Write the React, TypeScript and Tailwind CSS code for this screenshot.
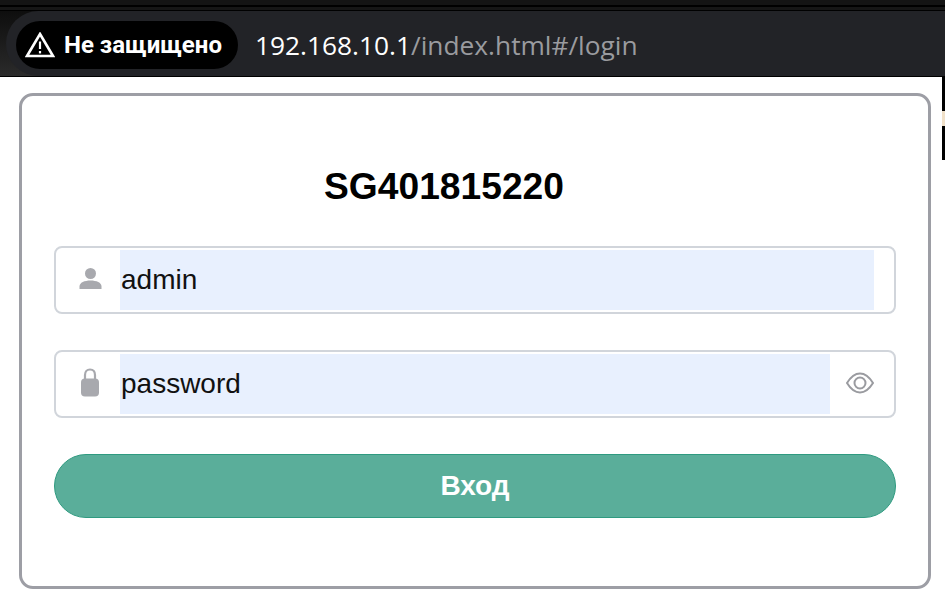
export default function App() {
  return (
    <div className="relative w-[945px] h-[609px] overflow-hidden bg-white font-['Liberation_Sans',sans-serif]">
      {/* browser bar */}
      <div className="h-[77px] flex flex-col bg-black">
        <div className="h-[5px] bg-[#141414]" />
        <div className="h-[2px] bg-black" />
        <div className="h-[3px] bg-[#161616]" />
        <div className="h-[1px] bg-black" />
        <div className="flex-1 bg-gradient-to-b from-[#0e0e0e] to-[#2b2b2b]">
          <div className="h-full ml-[6px] rounded-l-[33px] bg-[#222327] flex items-center pl-[10px] pt-[3px]">
            <div className="h-[48px] w-[222px] shrink-0 rounded-[24px] bg-black flex items-center pl-[9px] gap-[9px]">
              <svg width="30" height="26" viewBox="0 0 30 26" fill="none">
                <path d="M15 2 L28 24 H2 Z" stroke="#fff" strokeWidth="2.6" />
                <path d="M15 9.5 V17" stroke="#fff" strokeWidth="2.2" />
                <path d="M15 19 V21.4" stroke="#fff" strokeWidth="2.2" />
              </svg>
              <span className="font-['Roboto',sans-serif] font-bold text-[24px] leading-none text-white whitespace-nowrap">Не защищено</span>
            </div>
            <div className="ml-[17px] font-['Open_Sans',sans-serif] text-[26.3px] leading-none whitespace-nowrap">
              <span className="text-white">192.168.10.1</span>
              <span className="text-[#9a9b9f]">/index.html#/login</span>
            </div>
          </div>
        </div>
        <div className="h-[1px] bg-black" />
      </div>

      {/* login card */}
      <div className="ml-[19px] mt-[16px] w-[912px] h-[496px] rounded-[14px] border-[3px] border-[#9d9ea5] bg-white px-[32px] pt-[68px]">
        <h1 className="h-[44px] pr-[62px] text-center text-[37.2px] leading-[44px] font-bold text-black">SG401815220</h1>

        <div className="mt-[38px] h-[68px] flex items-center rounded-[8px] border-2 border-[#d1d5db] bg-white pl-[64px] pr-[20px] relative">
          <svg className="absolute left-[23px] top-[19px]" width="24" height="24" viewBox="0 0 24 24" fill="#a8a9ae">
            <circle cx="11.5" cy="6.5" r="5.5" />
            <path d="M0.5 22 V19.5 C0.5 15.5 5.5 13.5 11.5 13.5 C17.5 13.5 22.5 15.5 22.5 19.5 V22 Z" />
          </svg>
          <input
            readOnly
            value="admin"
            className="w-full h-[60px] pl-px bg-[#e8f0fe] text-[28px] text-[#111] outline-none"
          />
        </div>

        <div className="mt-[36px] h-[68px] flex items-center rounded-[8px] border-2 border-[#d1d5db] bg-white pl-[64px] pr-[64px] relative">
          <svg className="absolute left-[24px] top-[16px]" width="20" height="29" viewBox="0 0 20 29">
            <path d="M5 13 V7 C5 3.5 7 1.5 10 1.5 C13 1.5 15 3.5 15 7 V13" fill="none" stroke="#a8a9ae" strokeWidth="2.2" />
            <rect x="1" y="10.5" width="18" height="18" rx="4" fill="#a8a9ae" />
          </svg>
          <input
            readOnly
            value="password"
            className="w-full h-[60px] pl-px bg-[#e8f0fe] text-[28px] text-[#111] outline-none"
          />
          <svg className="absolute right-[20px] top-[19px]" width="28" height="24" viewBox="0 0 28 24" fill="none" stroke="#9a9ba0" strokeWidth="2">
            <path d="M1 12 C5 5.5 9.5 2.5 14 2.5 C18.5 2.5 23 5.5 27 12 C23 18.5 18.5 21.5 14 21.5 C9.5 21.5 5 18.5 1 12 Z" />
            <circle cx="14" cy="12" r="5.5" />
          </svg>
        </div>

        <button className="mt-[36px] w-full h-[64px] rounded-[32px] border border-[#2f9a80] bg-[#5aae9a] text-[28px] font-bold text-white">
          Вход
        </button>
      </div>

      {/* window edge behind the page */}
      <div className="absolute right-0 top-[77px] w-[3px] h-[83px] bg-black flex items-center overflow-hidden">
        <div className="h-[15px] w-[3px] bg-[#f0e0c8]" />
      </div>
    </div>
  );
}
